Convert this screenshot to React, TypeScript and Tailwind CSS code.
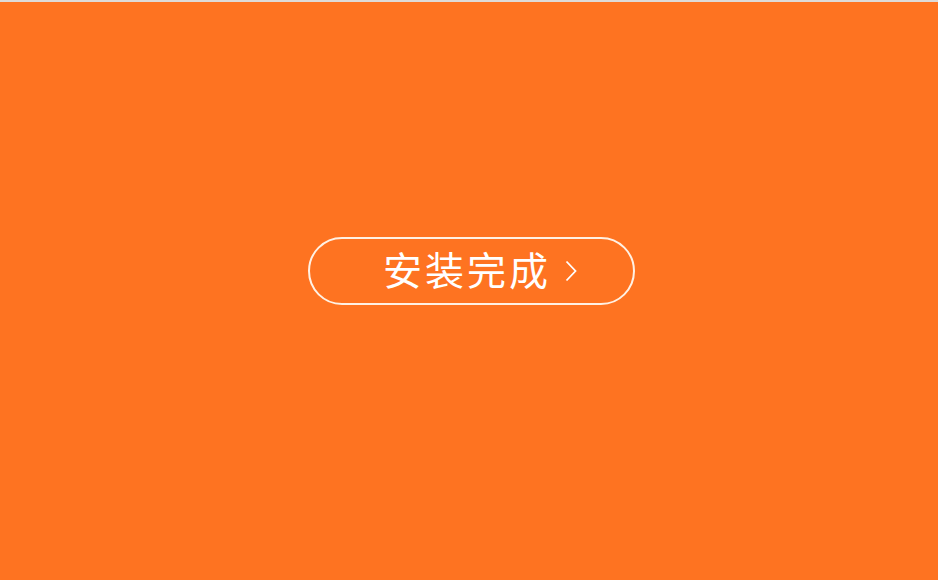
export default function App() {
  return (
    <div className="w-[938px] h-[580px] bg-[#fe7321] border-t-2 border-[#dedbd8] flex flex-col items-center overflow-hidden">
      <button className="mt-[235px] ml-[5px] w-[327px] h-[68px] rounded-full border-2 border-[#fff1e4] flex items-center pl-[73px] pb-[5px] text-white">
        <span className="text-[39px] leading-none tracking-[3px] font-['Noto_Sans_CJK_SC',sans-serif]">
          安装完成
        </span>
        <svg className="ml-[14px] mt-[4px]" width="12" height="22" viewBox="0 0 12 22" fill="none">
          <polyline points="1.5,1.5 10.5,11 1.5,20.5" stroke="white" strokeWidth="1.8" />
        </svg>
      </button>
    </div>
  );
}
